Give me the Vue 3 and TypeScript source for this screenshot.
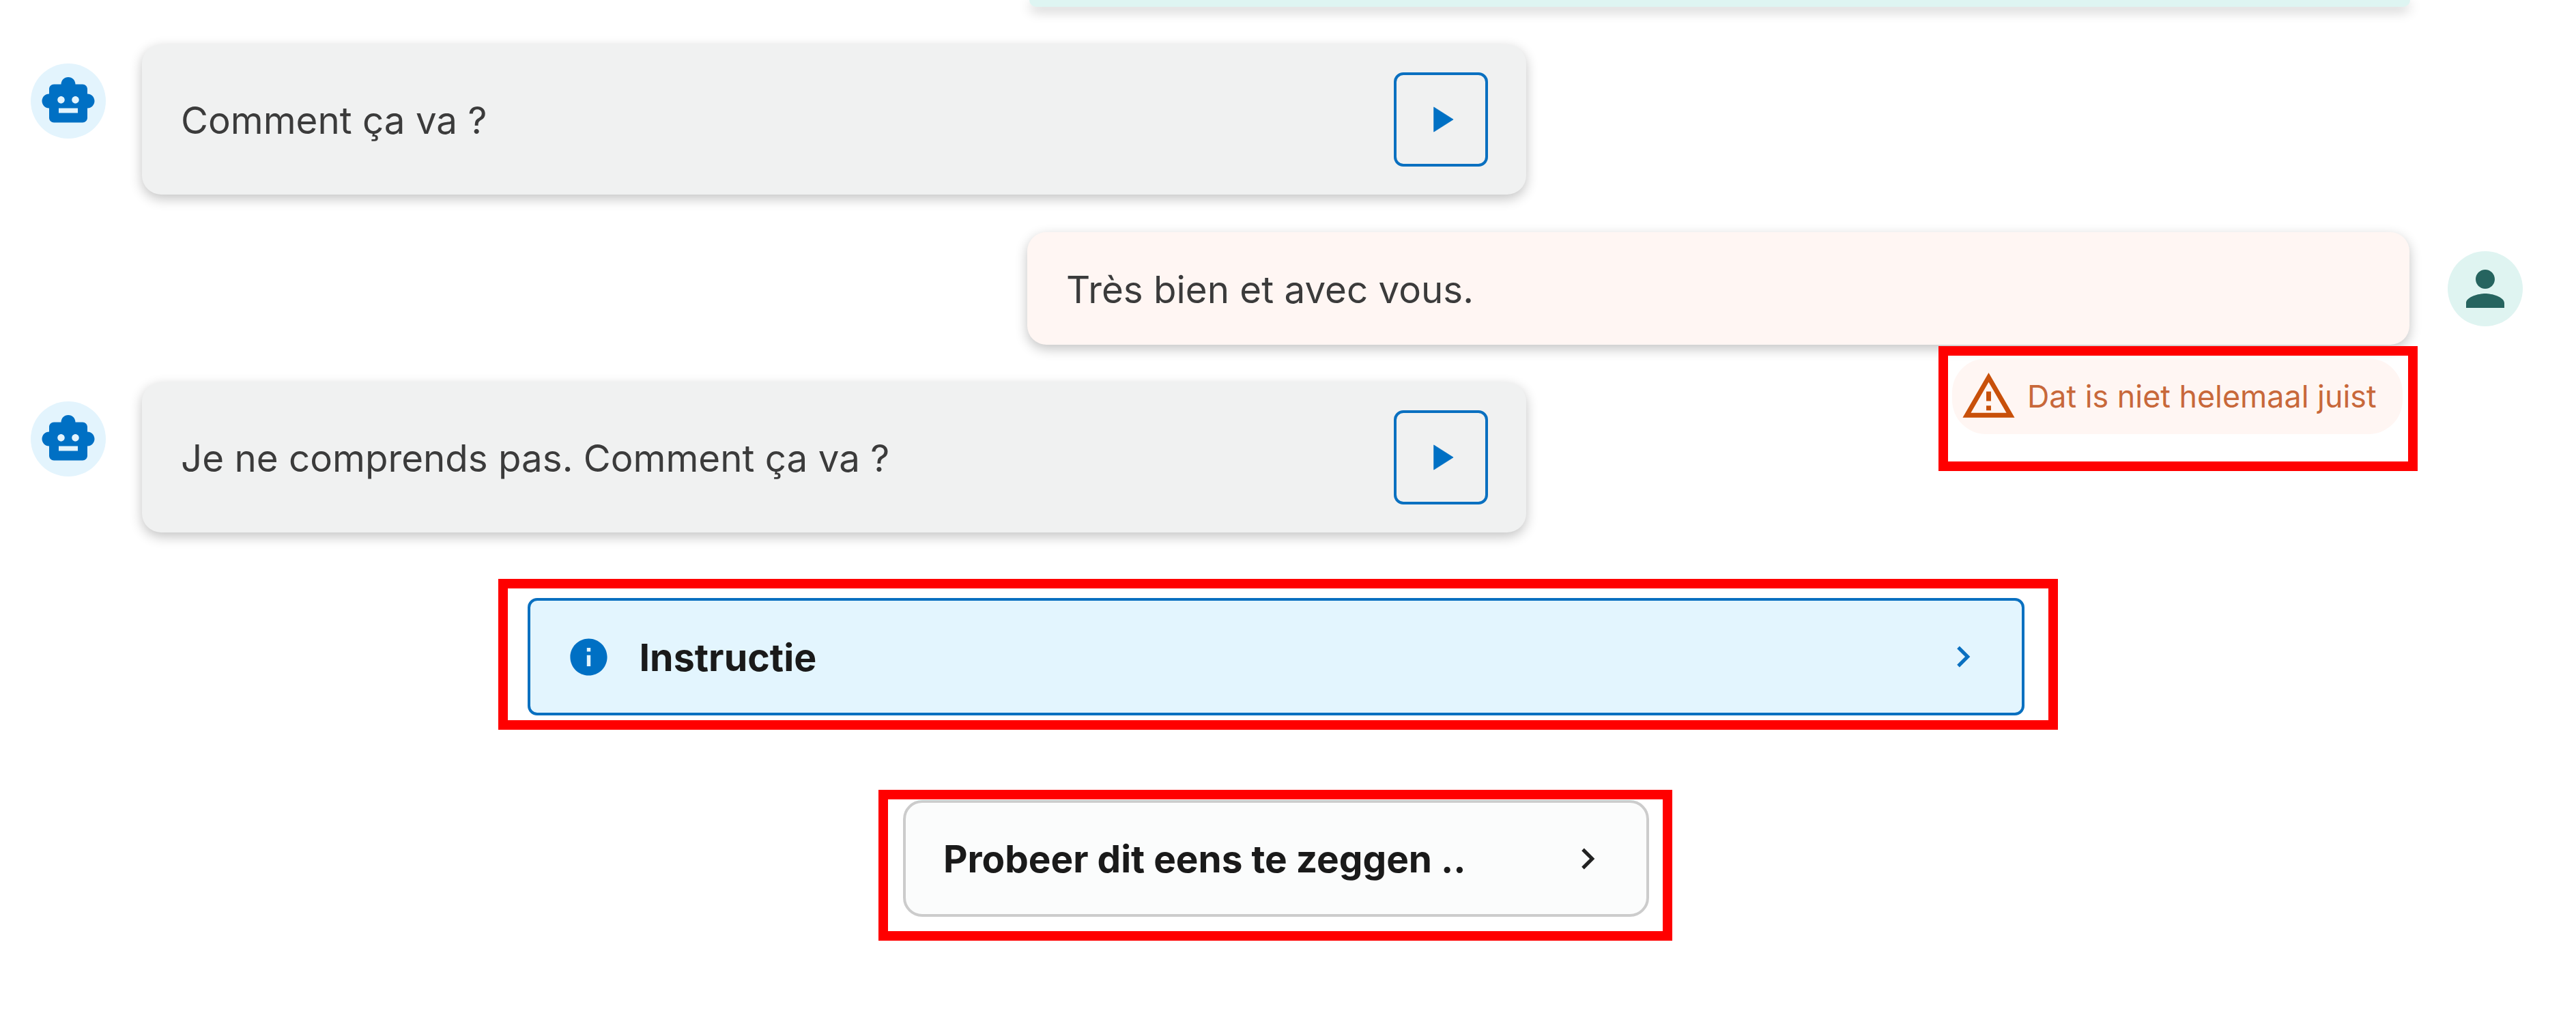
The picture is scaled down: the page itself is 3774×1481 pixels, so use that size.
<script setup lang="ts">
const botIcon =
  'M20 9V7c0-1.1-.9-2-2-2h-3c0-1.66-1.34-3-3-3S9 3.34 9 5H6c-1.1 0-2 .9-2 2v2c-1.66 0-3 1.34-3 3s1.34 3 3 3v4c0 1.1.9 2 2 2h12c1.1 0 2-.9 2-2v-4c1.66 0 3-1.34 3-3s-1.34-3-3-3zM7.5 11.5c0-.83.67-1.5 1.5-1.5s1.5.67 1.5 1.5S9.83 13 9 13s-1.5-.67-1.5-1.5zM16 17H8v-2h8v2zm-1-4c-.83 0-1.5-.67-1.5-1.5S14.17 10 15 10s1.5.67 1.5 1.5S15.83 13 15 13z'
const chevron = 'M10 6L8.59 7.41 13.17 12l-4.58 4.59L10 18l6-6z'
</script>

<template>
  <div class="page">
    <div class="row row-user row-top">
      <div class="bubble bubble-prev"></div>
    </div>

    <div class="row row-bot">
      <div class="avatar avatar-bot">
        <svg viewBox="0 0 24 24" class="avatar-icon"><path :d="botIcon" /></svg>
      </div>
      <div class="bubble bubble-bot">
        <span class="bubble-text">Comment ça va ?</span>
        <button class="play">
          <svg viewBox="0 0 24 24"><path d="M8 5v14l11-7z" /></svg>
        </button>
      </div>
    </div>

    <div class="row row-user row-answer">
      <div class="bubble bubble-user"><span class="bubble-text">Très bien et avec vous.</span></div>
      <div class="avatar avatar-user">
        <svg viewBox="0 0 24 24" class="avatar-icon">
          <path d="M12 12c2.21 0 4-1.79 4-4s-1.79-4-4-4-4 1.79-4 4 1.79 4 4 4zm0 2c-2.67 0-8 1.34-8 4v2h16v-2c0-2.66-5.33-4-8-4z" />
        </svg>
      </div>
      <div class="mark mark-feedback">
        <div class="feedback">
          <svg viewBox="0 0 24 24">
            <path d="M12 5.99L19.53 19H4.47L12 5.99M12 2L1 21h22L12 2zm1 14h-2v2h2v-2zm0-6h-2v4h2v-4z" />
          </svg>
          <span>Dat is niet helemaal juist</span>
        </div>
      </div>
    </div>

    <div class="row row-bot row-bot-second">
      <div class="avatar avatar-bot">
        <svg viewBox="0 0 24 24" class="avatar-icon"><path :d="botIcon" /></svg>
      </div>
      <div class="bubble bubble-bot">
        <span class="bubble-text">Je ne comprends pas. Comment ça va ?</span>
        <button class="play">
          <svg viewBox="0 0 24 24"><path d="M8 5v14l11-7z" /></svg>
        </button>
      </div>
    </div>

    <div class="actions">
      <div class="mark mark-instruction">
        <button class="panel panel-instruction">
          <span class="panel-title">
            <svg viewBox="0 0 24 24" class="info">
              <path d="M12 2C6.48 2 2 6.48 2 12s4.48 10 10 10 10-4.48 10-10S17.52 2 12 2zm1 15h-2v-6h2v6zm0-8h-2V7h2v2z" />
            </svg>
            Instructie
          </span>
          <svg viewBox="0 0 24 24" class="chevron"><path :d="chevron" /></svg>
        </button>
      </div>

      <div class="mark mark-hint">
        <button class="panel panel-hint">
          <span class="panel-title">Probeer dit eens te zeggen ..</span>
          <svg viewBox="0 0 24 24" class="chevron"><path :d="chevron" /></svg>
        </button>
      </div>
    </div>
  </div>
</template>

<style scoped>
.page {
  width: 3774px;
  height: 1481px;
  display: flex;
  flex-direction: column;
  overflow: hidden;
  background: #fff;
  font-family: Inter, "Liberation Sans", sans-serif;
  color: #3b3b3b;
}

.row {
  display: flex;
  align-items: flex-start;
  position: relative;
}

.row-bot {
  padding-left: 45px;
  gap: 53px;
  margin-top: 55px;
}

.row-bot-second {
  margin-top: 55px;
}

.row-user {
  justify-content: flex-end;
  padding-right: 78px;
  gap: 56px;
}

.row-top {
  padding-right: 243px;
}

.row-answer {
  margin-top: 55px;
}

.avatar {
  width: 110px;
  height: 110px;
  border-radius: 50%;
  display: flex;
  align-items: center;
  justify-content: center;
  flex-shrink: 0;
  margin-top: 28px;
}

.avatar-icon {
  width: 84px;
  height: 84px;
  fill: currentColor;
}

.avatar-bot {
  background: #e3f4fd;
  color: #0070c4;
}

.avatar-user {
  background: #dff4f1;
  color: #26645f;
}

.bubble {
  border-radius: 28px;
  box-shadow: 0 6px 18px rgba(0, 0, 0, 0.24);
  font-size: 54.7px;
  line-height: 1;
}

.bubble-text {
  padding-top: 3px;
}

.bubble-prev {
  width: 2023px;
  height: 10px;
  background: #def5f2;
  border-radius: 0 0 28px 28px;
}

.bubble-bot {
  width: 2028px;
  height: 220px;
  box-sizing: border-box;
  padding: 0 56px 0 57px;
  background: #f0f1f1;
  display: flex;
  align-items: center;
  justify-content: space-between;
}

.bubble-user {
  width: 2025px;
  height: 165px;
  box-sizing: border-box;
  padding: 0 57px;
  background: #fff6f3;
  display: flex;
  align-items: center;
}

.play {
  width: 138px;
  height: 138px;
  padding: 0;
  border: 4px solid #0a70c0;
  border-radius: 14px;
  background: transparent;
  display: flex;
  align-items: center;
  justify-content: center;
}

.play svg {
  width: 62px;
  height: 62px;
  fill: #0070c4;
  stroke: #0070c4;
  stroke-width: 0.3;
  stroke-linejoin: round;
}

/* red review markers drawn round the annotated elements */
.mark {
  border: 14px solid #ff0000;
  box-sizing: border-box;
}

.mark-feedback {
  position: absolute;
  top: 167px;
  left: 2840px;
  width: 702px;
  height: 183px;
  padding: 4px 8px 0 6px;
}

.feedback {
  height: 111px;
  box-sizing: border-box;
  padding-left: 16px;
  border-radius: 50px;
  background: #fff6f3;
  display: flex;
  align-items: center;
  gap: 15px;
  color: #c8683a;
  font-size: 44.8px;
}

.feedback svg {
  width: 83px;
  height: 83px;
  margin-left: -4px;
  fill: #c8500a;
  flex-shrink: 0;
}

.actions {
  display: flex;
  flex-direction: column;
  align-items: center;
  padding-right: 30px;
  margin-top: 68px;
  gap: 88px;
}

.mark-instruction {
  width: 2285px;
  padding: 14px 35px 7px 29px;
}

.mark-hint {
  width: 1163px;
  margin-right: 7px;
  padding: 1px 20px 21px 22px;
}

.panel {
  width: 100%;
  box-sizing: border-box;
  padding: 0 55px 0 53px;
  display: flex;
  align-items: center;
  justify-content: space-between;
  font-family: inherit;
  cursor: pointer;
}

.panel-instruction {
  height: 172px;
  background: #e3f5fe;
  border: 4px solid #0a70c0;
  border-radius: 14px;
  color: #0a70c0;
}

.panel-hint {
  height: 171px;
  padding-left: 55px;
  background: #fbfcfc;
  border: 4px solid #cccccc;
  border-radius: 28px;
  color: #222;
}

.panel-title {
  display: flex;
  align-items: center;
  gap: 42px;
  font-weight: 700;
  color: #1a1a1a;
}

.panel-instruction .panel-title {
  font-size: 55.5px;
}

.panel-hint .panel-title {
  font-size: 54.9px;
}

.info {
  width: 65px;
  height: 65px;
  fill: #0070c4;
}

.chevron {
  width: 62px;
  height: 62px;
  fill: currentColor;
}
</style>

<style>
body {
  background: #fff;
}
</style>
